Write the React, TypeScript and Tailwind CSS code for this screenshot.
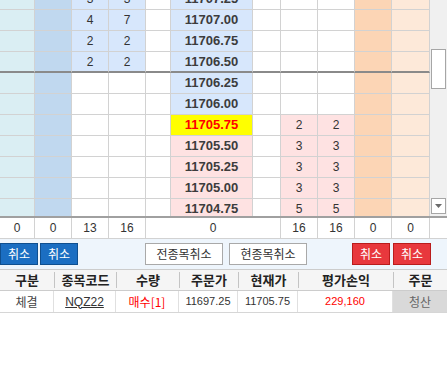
import React from "react";

// column widths of the order book grid (right border included)
const COLS = [35, 37, 37, 37, 25, 82, 28, 37, 37, 37, 38];

type Row = {
  sell1?: string;
  sell2?: string;
  price: string;
  buy1?: string;
  buy2?: string;
  zone: "ask" | "cur" | "bid";
  divider?: boolean;
};

const rows: Row[] = [
  { sell1: "3", sell2: "3", price: "11707.25", zone: "ask" },
  { sell1: "4", sell2: "7", price: "11707.00", zone: "ask" },
  { sell1: "2", sell2: "2", price: "11706.75", zone: "ask" },
  { sell1: "2", sell2: "2", price: "11706.50", zone: "ask", divider: true },
  { price: "11706.25", zone: "ask" },
  { price: "11706.00", zone: "ask" },
  { price: "11705.75", buy1: "2", buy2: "2", zone: "cur" },
  { price: "11705.50", buy1: "3", buy2: "3", zone: "bid" },
  { price: "11705.25", buy1: "3", buy2: "3", zone: "bid" },
  { price: "11705.00", buy1: "3", buy2: "3", zone: "bid" },
  { price: "11704.75", buy1: "5", buy2: "5", zone: "bid" },
];

const BookRow = ({ row }: { row: Row }) => {
  const line = row.divider
    ? "border-b-2 border-b-[#8a8a8a]"
    : "border-b border-b-[#d2d2d2]";
  const cell = `h-[21px] shrink-0 flex items-center justify-center border-r border-r-[#d2d2d2] ${line}`;

  const priceBg =
    row.zone === "ask"
      ? "bg-[#d7e7fc] text-[#3c3c3c]"
      : row.zone === "cur"
      ? "bg-[#ffff00] text-[#ff0000]"
      : "bg-[#fee2e2] text-[#3c3c3c]";

  return (
    <div className="flex">
      <div className={`${cell} bg-[#daeef3]`} style={{ width: COLS[0] }} />
      <div className={`${cell} bg-[#c0d8ef]`} style={{ width: COLS[1] }} />
      <div className={`${cell} ${row.sell1 ? "bg-[#d7e7fc]" : "bg-white"}`} style={{ width: COLS[2] }}>
        {row.sell1}
      </div>
      <div className={`${cell} ${row.sell2 ? "bg-[#d7e7fc]" : "bg-white"}`} style={{ width: COLS[3] }}>
        {row.sell2}
      </div>
      <div className={`${cell} bg-white`} style={{ width: COLS[4] }} />
      <div className={`${cell} ${priceBg} text-[13px] font-bold`} style={{ width: COLS[5] }}>
        {row.price}
      </div>
      <div className={`${cell} bg-white`} style={{ width: COLS[6] }} />
      <div className={`${cell} ${row.buy1 ? "bg-[#fee2e2]" : "bg-white"}`} style={{ width: COLS[7] }}>
        {row.buy1}
      </div>
      <div className={`${cell} ${row.buy2 ? "bg-[#fee2e2]" : "bg-white"}`} style={{ width: COLS[8] }}>
        {row.buy2}
      </div>
      <div className={`${cell} bg-[#fcd5b5]`} style={{ width: COLS[9] }} />
      <div className={`${cell} bg-[#fde9d9]`} style={{ width: COLS[10] }} />
    </div>
  );
};

const Scrollbar = () => (
  <div className="w-[17px] bg-[#f0f0f0] flex flex-col items-center pt-[49px] pb-[2px]">
    <div className="w-[15px] h-[40px] bg-white border border-[#a6a6a6]" />
    <div className="flex-1" />
    <div className="w-[15px] h-[16px] bg-white border border-[#a6a6a6] flex items-center justify-center">
      <svg width="7" height="4" viewBox="0 0 7 4">
        <path d="M0 0 L7 0 L3.5 4 Z" fill="#6b6b6b" />
      </svg>
    </div>
  </div>
);

const totals = [
  { w: 35, v: "0" },
  { w: 37, v: "0" },
  { w: 37, v: "13" },
  { w: 37, v: "16" },
  { w: 135, v: "0" },
  { w: 37, v: "16" },
  { w: 37, v: "16" },
  { w: 37, v: "0" },
  { w: 38, v: "0" },
];

const BlueBtn = ({ className }: { className?: string }) => (
  <button className={`h-[22px] w-[38px] bg-[#1b6ec2] border border-[#0f4f8f] text-white text-[12px] font-['Noto_Sans_CJK_KR',sans-serif] leading-none ${className ?? ""}`}>
    취소
  </button>
);

const RedBtn = ({ className }: { className?: string }) => (
  <button className={`h-[22px] w-[38px] bg-[#e8383d] border border-[#b91c1c] text-white text-[12px] font-['Noto_Sans_CJK_KR',sans-serif] leading-none ${className ?? ""}`}>
    취소
  </button>
);

const WhiteBtn = ({ label, className }: { label: string; className?: string }) => (
  <button className={`h-[22px] w-[78px] bg-white border border-[#a9a9a9] text-[#333] text-[12px] font-['Noto_Sans_CJK_KR',sans-serif] leading-none ${className ?? ""}`}>
    {label}
  </button>
);

const heads = [
  { w: 54, t: "구분" },
  { w: 62, t: "종목코드" },
  { w: 63, t: "수량" },
  { w: 59, t: "주문가" },
  { w: 60, t: "현재가" },
  { w: 95, t: "평가손익" },
  { w: 54, t: "주문" },
];

export default function App() {
  return (
    <div className="w-[447px] h-[367px] overflow-hidden bg-white text-[12px] text-[#333] font-['Liberation_Sans','Noto_Sans_CJK_KR',sans-serif]">
      {/* order book */}
      <div className="flex h-[218px] border-b-2 border-b-[#a0a0a0]">
        <div className="w-[430px] overflow-hidden">
          <div className="-mt-[11px]">
            {rows.map((r, i) => (
              <BookRow key={i} row={r} />
            ))}
          </div>
        </div>
        <Scrollbar />
      </div>

      {/* totals */}
      <div className="flex h-[21px] border-b border-b-[#d2d2d2]">
        {totals.map((t, i) => (
          <div
            key={i}
            className="shrink-0 flex items-center justify-center border-r border-r-[#d2d2d2]"
            style={{ width: t.w }}
          >
            {t.v}
          </div>
        ))}
      </div>

      {/* cancel buttons */}
      <div className="flex items-center h-[30px] bg-[#eef5fc]">
        <BlueBtn className="w-[37px]" />
        <BlueBtn className="ml-[2px]" />
        <WhiteBtn label="전종목취소" className="ml-[67px]" />
        <WhiteBtn label="현종목취소" className="ml-[6px]" />
        <RedBtn className="ml-[45px]" />
        <RedBtn className="ml-[3px]" />
      </div>

      {/* positions */}
      <div className="flex h-[22px] items-center bg-[#f5f5f5] border-y border-[#cccccc] font-['Noto_Sans_CJK_KR',sans-serif] font-bold text-[13px] text-[#222]">
        {heads.map((h, i) => (
          <React.Fragment key={h.t}>
            {i > 0 && <div className="w-px h-[16px] bg-[#c4c4c4] shrink-0" />}
            <div className="flex items-center justify-center shrink-0" style={{ width: i > 0 ? h.w - 1 : h.w }}>
              {h.t}
            </div>
          </React.Fragment>
        ))}
      </div>
      <div className="flex h-[22px] border-b border-b-[#d6d6d6] text-[11px]">
        <div className="w-[54px] flex items-center justify-center border-r border-r-[#e0e0e0] text-[12px] text-[#444] font-['Noto_Sans_CJK_KR',sans-serif]">
          체결
        </div>
        <div className="w-[62px] flex items-center justify-center border-r border-r-[#e0e0e0] text-[12px] underline">
          NQZ22
        </div>
        <div className="w-[63px] flex items-center justify-center border-r border-r-[#e0e0e0] text-[12px] text-[#ff0000] font-['Noto_Sans_CJK_KR',sans-serif]">
          매수[1]
        </div>
        <div className="w-[59px] flex items-center justify-center border-r border-r-[#e0e0e0]">
          11697.25
        </div>
        <div className="w-[60px] flex items-center justify-center border-r border-r-[#e0e0e0]">
          11705.75
        </div>
        <div className="w-[95px] flex items-center justify-center border-r border-r-[#e0e0e0] text-[#ff0000]">
          229,160
        </div>
        <div className="w-[54px] flex items-center justify-center bg-[#d9d9d9] text-[12px] text-[#666] font-['Noto_Sans_CJK_KR',sans-serif]">
          청산
        </div>
      </div>
    </div>
  );
}
